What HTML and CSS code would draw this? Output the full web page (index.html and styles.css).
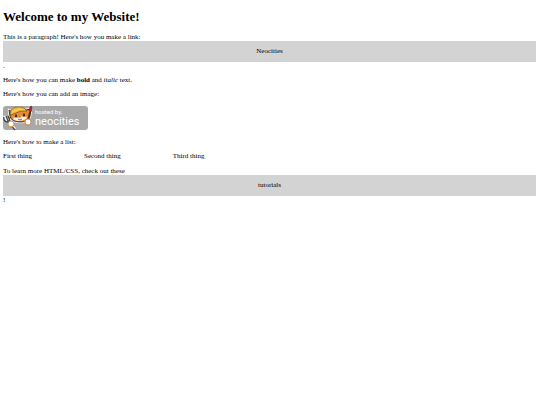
FILE: index.html
```html
<!DOCTYPE html>
<html lang="en">
<head>
  <meta charset="UTF-8">
  <meta name="viewport" content="width=device-width, initial-scale=1.0">
  <title>My Website</title>
  <link rel="stylesheet" href="styles.css">
</head>
<body>
  <h1>Welcome to my Website!</h1>

  <p>This is a paragraph! Here's how you make a link: <a href="#neocities">Neocities</a>.</p>

  <p>Here's how you can make <strong>bold</strong> and <em>italic</em> text.</p>

  <p>Here's how you can add an image:</p>

  <svg class="badge" viewBox="0 0 85 26" role="img" aria-label="hosted by neocities">
    <rect x="0" y="1" width="85" height="24" rx="3" fill="#a9a9a9"/>
    <!-- cat -->
    <g stroke="#fff" stroke-width="2.5" stroke-linejoin="round" fill="#fff">
      <path d="M6 5L8 6Q15 0 23 5L28 4L27 11Q25 17 18 17Q9 17 7 12Z"/>
      <path d="M1 11L12 24M27 3L24 18" fill="none"/>
    </g>
    <path d="M6 5L9 7L12 4L23 5L28 4L27 11Q25 17 18 17Q8 17 7 11Z" fill="#e58a3a" stroke="#4a2a18"/>
    <path d="M10 14Q11 11 15 13Q17 10 20 12Q24 11 24 13Q21 16 17 16Q12 16 10 14Z" fill="#fff1dd"/>
    <path d="M7 9Q7 3 14 2Q21 1 24 6Q18 5 13 8L8 10Z" fill="#edba3c" stroke="#6b4a1b" stroke-width=".7"/>
    <path d="M9 7Q15 3 22 5" fill="none" stroke="#ffda68" stroke-width=".8"/>
    <ellipse cx="13" cy="11" rx="1" ry="1.4" fill="#28201c"/>
    <ellipse cx="21" cy="10" rx="1" ry="1.4" fill="#28201c"/>
    <path d="M15 14Q17 16 19 14M16 12H18" fill="none" stroke="#8b3425" stroke-width=".8"/>
    <!-- fork and brush -->
    <path d="M1 12Q0 17 5 17L12 25M5 11Q8 15 5 17M3 11L5 16" fill="none" stroke="#45494c" stroke-width="1.3"/>
    <path d="M27 7L24 20" stroke="#59301f" stroke-width="1.8"/>
    <path d="M26 6L27 2Q29 0 29 3L28 7Z" fill="#bd2737" stroke="#5a1e22" stroke-width=".6"/>
    <circle cx="8" cy="19" r="3" fill="#fff" stroke="#a77746" stroke-width=".7"/>
    <circle cx="25" cy="17" r="3" fill="#fff" stroke="#a77746" stroke-width=".7"/>
    <path d="M5 20Q7 23 10 21M22 16Q22 20 25 20" fill="none" stroke="#df9648" stroke-width="1.2"/>
    <text class="badge-small" x="32" y="9">hosted by,</text>
    <text class="badge-name" x="32" y="20">neocities</text>
  </svg>

  <p>Here's how to make a list:</p>

  <ul>
    <li>First thing</li>
    <li>Second thing</li>
    <li>Third thing</li>
  </ul>

  <p>To learn more HTML/CSS, check out these <a href="#tutorials">tutorials</a>!</p>
</body>
</html>
```
FILE: styles.css
```css
body {
  margin: 9px 4px 8px 3px;
  background-color: white;
  color: black;
  font-family: "Liberation Serif", serif;
  font-size: 7px;
  line-height: 8px;
}

h1 {
  margin: 0 0 8px;
  font-size: 13px;
  line-height: 16px;
}

p {
  margin: 0 0 6px;
}

a {
  display: block;
  padding: 7px;
  background-color: lightgray;
  color: black;
  line-height: 7px;
  text-align: center;
  text-decoration: none;
}

.badge {
  display: block;
  width: 85px;
  height: 26px;
  margin: 7px 0;
}

.badge text {
  fill: white;
  font-family: Roboto, sans-serif;
}

.badge-small {
  font-size: 6px;
}

.badge-name {
  font-size: 11px;
}

ul {
  display: flex;
  gap: 52px;
  margin: 0 0 7px;
  padding: 0;
  list-style: none;
}
```
